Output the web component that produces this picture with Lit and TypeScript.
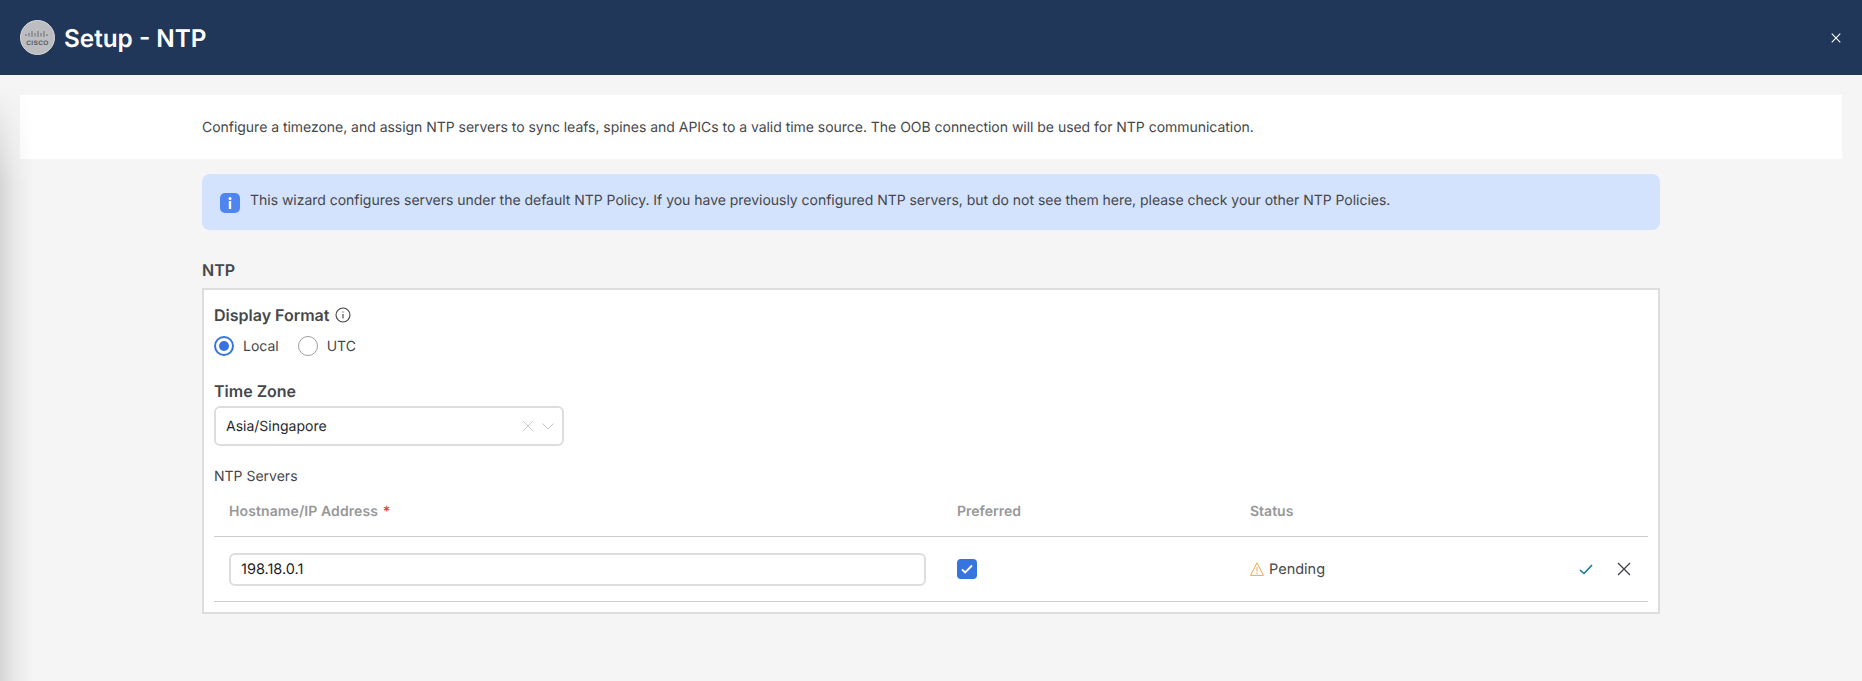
import { LitElement, html, css } from "lit";
import { customElement } from "lit/decorators.js";

const x = (s: number, c: string, w = 1.2) => html`<svg width=${s} height=${s} viewBox="0 0 14 14" fill="none" stroke=${c} stroke-width=${w}><path d="M1 1l12 12M13 1L1 13"/></svg>`;

@customElement("app-root")
export class AppRoot extends LitElement {
  static styles = css`
    :host { display: block; width: 1862px; height: 681px; background: #f5f5f5; font-family: Inter, "Liberation Sans", sans-serif; color: #45474a; overflow: hidden; position: relative; font-size: 14px; text-rendering: geometricPrecision; }
    .shade { position: absolute; z-index: 1; left: 0; top: 75px; width: 34px; bottom: 0; background: linear-gradient(to right, rgba(0,0,0,.13), rgba(0,0,0,.05) 40%, rgba(0,0,0,0)); -webkit-mask-image: linear-gradient(to bottom, transparent 10px, #000 110px); mask-image: linear-gradient(to bottom, transparent 10px, #000 110px); }
    header { height: 75px; background: #20375a; display: flex; align-items: center; padding: 0 21px 0 20px; gap: 10px; box-sizing: border-box; }
    .logo { width: 35px; height: 35px; flex: none; }
    h1 { margin: 0 0 0 -1px; font-size: 24.3px; font-weight: 600; color: #fff; flex: 1; }
    .close { display: flex; }
    main { display: flex; flex-direction: column; padding: 20px 20px 0; position: relative; }
    .band { background: #fff; height: 64px; display: flex; align-items: center; padding: 1px 0 0 182px; box-sizing: border-box; line-height: 20px; letter-spacing: -0.03px; }
    .col { margin: 15px 0 0 182px; width: 1458px; }
    .alert { height: 56px; background: #d3e2fd; border-radius: 8px; display: flex; align-items: center; gap: 10px; padding: 0 18px; box-sizing: border-box; }
    .alert svg { flex: none; margin-top: 2px; }
    .alert span { padding-bottom: 4px; letter-spacing: -0.025px; }
    h2 { margin: 31px 0 8px; font-size: 16px; font-weight: 600; line-height: 19px; }
    .box { background: #fff; border: 2px solid #ddd; height: 326px; box-sizing: border-box; padding: 15px 10px 0; display: flex; flex-direction: column; }
    .lab { font-size: 16px; font-weight: 600; line-height: 20px; display: flex; align-items: center; gap: 6px; }
    .radios { display: flex; align-items: center; margin-top: 10px; height: 22px; }
    .radio { width: 20px; height: 20px; border-radius: 50%; border: 1px solid #9e9e9e; box-sizing: border-box; flex: none; margin-right: 9px; }
    .radio.on { border: 2px solid #3874e0; display: flex; align-items: center; justify-content: center; }
    .radio.on::after { content: ""; width: 10px; height: 10px; border-radius: 50%; background: #3874e0; }
    .r { margin-right: 19px; }
    .tz { margin-top: 24px; }
    .select { width: 350px; height: 40px; margin-top: 5px; border: 2px solid #ddd; border-radius: 6px; box-sizing: border-box; display: flex; align-items: center; padding: 0 8px 0 10px; gap: 8px; color: #26282b; }
    .select span { flex: 1; }
    .servers { margin-top: 21px; line-height: 20px; }
    .thead { display: grid; grid-template-columns: 728px 293px 1fr; padding: 0 0 0 15px; align-items: center; border-bottom: 1px solid #ccc; font-weight: 600; color: #979899; box-sizing: border-box; height: 50px; }
    .host { letter-spacing: 0.1px; }
    .req { color: #e2483d; margin-left: 1px; }
    .row { height: 65px; display: grid; grid-template-columns: 728px 293px 1fr auto; padding-left: 15px; align-items: center; border-bottom: 1px solid #ccc; box-sizing: border-box; }
    .input { width: 697px; height: 33px; border: 2px solid #ddd; border-radius: 6px; box-sizing: border-box; display: flex; align-items: center; padding-left: 10px; color: #1c1d1f; font-size: 14.5px; }
    .check { width: 20px; height: 20px; border-radius: 4px; background: #3874e0; display: flex; align-items: center; justify-content: center; }
    .status { display: flex; align-items: center; gap: 5px; font-size: 14.5px; }
    .acts { display: flex; align-items: center; gap: 24px; padding-right: 17px; }
    .acts svg { display: block; }
  `;

  render() {
    return html`
      <div class="shade"></div>
      <header>
        <svg class="logo" viewBox="0 0 35 35">
          <circle cx="17.5" cy="17.5" r="17" fill="#bcbdc0" stroke="#d9d9d9" stroke-width="1"/>
          <g stroke="#55585c" stroke-width=".8" fill="none">
            <path d="M6.5 14v2M9.5 13v3.5M12.5 11v6M15.5 13v3.5M18.5 11v6M21.5 13v3.5M24.5 11v6M27.5 14v2" transform="translate(-.5 0)"/>
          </g>
          <text x="17.5" y="25" text-anchor="middle" font-size="6.5" font-weight="700" fill="#55585c" font-family="Liberation Sans, sans-serif" letter-spacing=".4">CISCO</text>
        </svg>
        <h1>Setup - NTP</h1>
        <span class="close">${x(10, "#fff", 1.5)}</span>
      </header>
      <main>
        <div class="band">Configure a timezone, and assign NTP servers to sync leafs, spines and APICs to a valid time source. The OOB connection will be used for NTP communication.</div>
        <div class="col">
          <div class="alert">
            <svg width="20" height="20" viewBox="0 0 20 20"><rect width="20" height="20" rx="5" fill="#4f85ee"/><rect x="8.8" y="8" width="2.4" height="8" fill="#fff"/><circle cx="10" cy="5.5" r="1.5" fill="#fff"/></svg>
            <span>This wizard configures servers under the default NTP Policy. If you have previously configured NTP servers, but do not see them here, please check your other NTP Policies.</span>
          </div>
          <h2>NTP</h2>
          <div class="box">
            <div class="lab">Display Format
              <svg width="16" height="16" viewBox="0 0 16 16" fill="none" stroke="#3f4144" stroke-width="1.1"><circle cx="8" cy="8" r="7"/><path d="M8 7v4.5"/><path d="M8 4.4v1.2"/></svg>
            </div>
            <div class="radios">
              <span class="radio on"></span><span class="r">Local</span>
              <span class="radio"></span><span>UTC</span>
            </div>
            <div class="lab tz">Time Zone</div>
            <div class="select">
              <span>Asia/Singapore</span>
              ${x(12, "#c4c5c7", 1)}
              <svg width="12" height="7" viewBox="0 0 12 7" fill="none" stroke="#c4c5c7" stroke-width="1"><path d="M.5 .5l5.5 5.5 5.5-5.5"/></svg>
            </div>
            <div class="servers">NTP Servers</div>
            <div class="thead">
              <span class="host">Hostname/IP Address <span class="req">*</span></span>
              <span>Preferred</span>
              <span>Status</span>
            </div>
            <div class="row">
              <div class="input">198.18.0.1</div>
              <div><div class="check"><svg width="12" height="10" viewBox="0 0 12 10" fill="none" stroke="#fff" stroke-width="1.8"><path d="M1 5.5l3.2 3L11 1.5"/></svg></div></div>
              <div class="status">
                <svg width="14" height="14" viewBox="0 0 14 14" fill="none" stroke="#efa94a" stroke-width="1"><path d="M7 .8L.6 13.4h12.8z"/><path d="M7 5v4.5M7 10.5v1.5"/></svg>
                <span>Pending</span>
              </div>
              <div class="acts">
                <svg width="14" height="11" viewBox="0 0 14 11" fill="none" stroke="#0d7a9a" stroke-width="1.6"><path d="M1 6l4 3.5L13 1"/></svg>
                ${x(14, "#3f4144", 1.3)}
              </div>
            </div>
          </div>
        </div>
      </main>
    `;
  }
}
